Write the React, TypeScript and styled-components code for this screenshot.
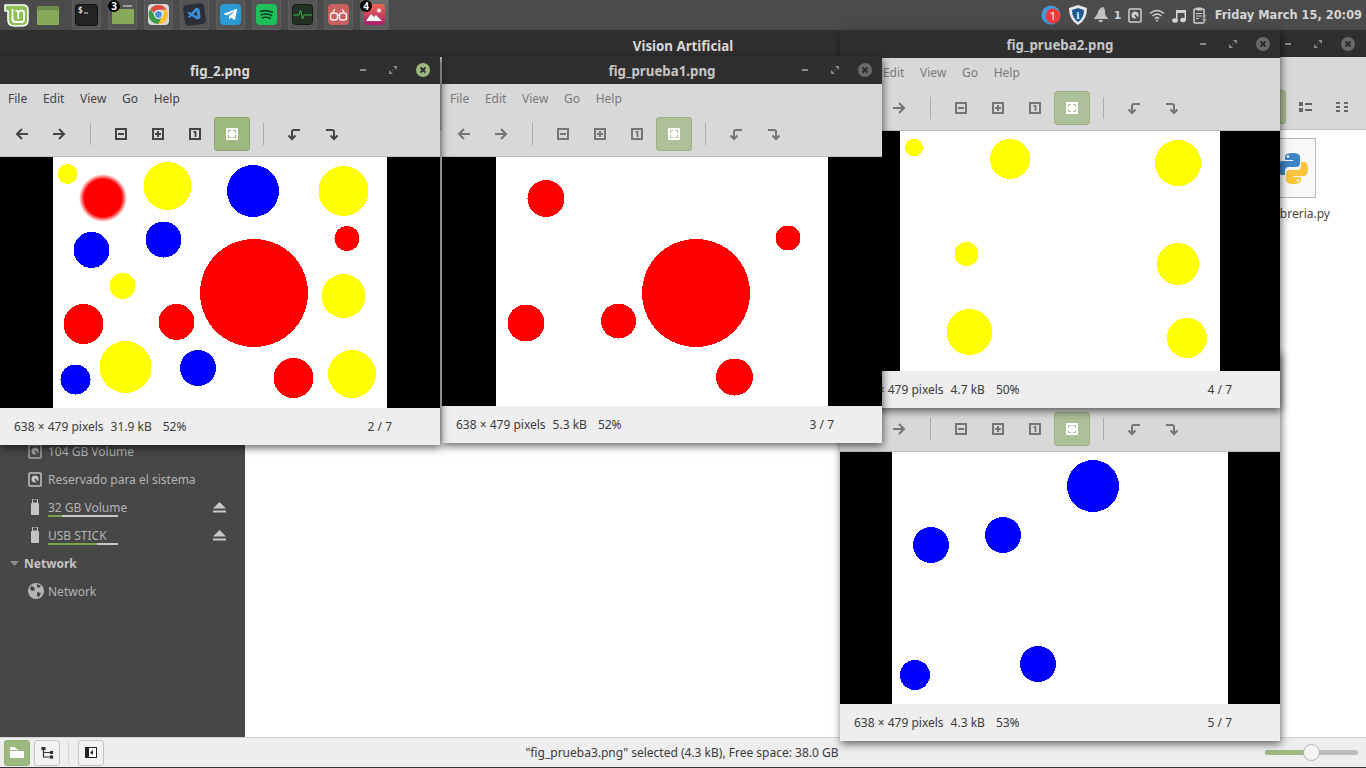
import React from "react";
import styled, { createGlobalStyle } from "styled-components";
import { FaTelegramPlane } from "react-icons/fa";
import { VscVscode } from "react-icons/vsc";

const GlobalStyle = createGlobalStyle`
  html, body {
    margin: 0;
    padding: 0;
    width: 1366px;
    height: 768px;
    overflow: hidden;
    background: #fff;
    font-family: "Noto Sans", "Liberation Sans", sans-serif;
  }
  * { box-sizing: border-box; }
`;

type Circle = [number, number, number];
interface Dot { color: string; items: Circle[] }

interface ViewerProps {
  title: string;
  left: number;
  top: number;
  width: number;
  active?: boolean;
  picX: number;
  picY: number;
  picW: number;
  picH: number;
  dots: Dot[];
  blurred?: Circle;
  kb: string;
  zoom: string;
  pos: string;
}

const Screen = styled.div`
  position: relative;
  width: 1366px;
  height: 768px;
  overflow: hidden;
  display: flex;
  flex-direction: column;
`;

const Panel = styled.div`
  height: 30px;
  background: #4b4b4b;
  display: flex;
  align-items: center;
  padding-left: 3px;
  flex-shrink: 0;
`;

const PanelSlot = styled.div<{ $w: number; $open?: boolean; $hot?: boolean; $gap?: number }>`
  position: relative;
  width: ${(p) => p.$w}px;
  height: 30px;
  margin-right: ${(p) => (p.$gap !== undefined ? p.$gap : p.$open ? 7 : 0)}px;
  display: flex;
  align-items: center;
  justify-content: center;
  background: ${(p) => (p.$hot ? "linear-gradient(#6e6e6e, #5c5c5c)" : p.$open ? "#545454" : "transparent")};
  border: ${(p) => (p.$open ? "1px solid #5e5e5e" : "none")};
  border-top: none;
  border-radius: 0 0 2px 2px;
`;

const Badge = styled.span`
  position: absolute;
  left: -1px;
  top: 0;
  width: 12px;
  height: 12px;
  border-radius: 50%;
  background: #000;
  color: #fff;
  font: 700 10px/12px "Noto Sans", sans-serif;
  text-align: center;
`;

const Tray = styled.div`
  margin-left: auto;
  display: flex;
  align-items: center;
  height: 30px;
  color: #d6d6d6;
  padding-right: 4px;
`;

const TrayIcon = styled.span<{ $w: number; $gap?: number }>`
  position: relative;
  width: ${(p) => p.$w}px;
  height: 30px;
  margin-right: ${(p) => p.$gap || 0}px;
  display: flex;
  align-items: center;
  justify-content: center;
`;

const TrayCount = styled.span`
  font: 700 11px "DejaVu Sans", sans-serif;
  color: #c8d0d8;
  width: 15px;
  padding-left: 5px;
`;

const Clock = styled.span`
  font: 700 11.4px "DejaVu Sans", sans-serif;
  color: #d4d4d4;
  margin-left: 3px;
  white-space: nowrap;
`;

const MainWindow = styled.div`
  flex: 1;
  display: flex;
  flex-direction: column;
  min-height: 0;
`;

const MainTitle = styled.div`
  height: 27px;
  background: #2f2f2f;
  color: #d8d8d8;
  font-size: 13.3px;
  font-weight: 700;
  line-height: 30px;
  text-align: center;
  display: grid;
  grid-template-columns: 1fr auto 1fr;
`;

const TitleText = styled.span`
  grid-column: 2;
  padding-top: 1px;
`;

const MainTools = styled.div`
  height: 73px;
  background: #d8d8d8;
  border-bottom: 1px solid #bdbdbd;
  display: flex;
  justify-content: flex-end;
  align-items: flex-end;
  padding: 0 5px 5px 0;
`;

const MainButton = styled.div<{ $on?: boolean }>`
  width: 36px;
  height: 34px;
  margin-right: 1px;
  display: flex;
  align-items: center;
  justify-content: center;
  border-radius: 3px;
  background: ${(p) => (p.$on ? "#aec09a" : "transparent")};
  border: ${(p) => (p.$on ? "1px solid #9cb083" : "none")};
`;

const MainBody = styled.div`
  flex: 1;
  display: flex;
  min-height: 0;
`;

const Sidebar = styled.div`
  width: 245px;
  background: #474747;
  display: flex;
  flex-direction: column;
  justify-content: flex-end;
  padding-bottom: 132px;
`;

const SideRow = styled.div`
  position: relative;
  height: 28px;
  display: flex;
  align-items: center;
  color: #b4b4b4;
  font-size: 12px;
`;

const SideIcon = styled.span<{ $inset?: number }>`
  width: 48px;
  padding-left: ${(p) => 28 + (p.$inset || 0)}px;
  display: flex;
  align-items: center;
`;

const SideHead = styled(SideRow)`
  font-weight: 700;
  color: #c4c4c4;
  padding-left: 10px;
  gap: 5px;
`;

const Usage = styled.span`
  position: absolute;
  left: 48px;
  bottom: 4px;
  width: 70px;
  height: 2px;
  background: #c8c8c8;
`;

const UsageFill = styled.span`
  display: block;
  height: 2px;
  background: #7ca34c;
`;

const EjectSlot = styled.span`
  margin-left: auto;
  margin-right: 19px;
  display: flex;
`;

const Content = styled.div`
  flex: 1;
  background: #fff;
  display: flex;
  justify-content: flex-end;
  padding: 8px 36px 0 0;
`;

const FileItem = styled.div`
  display: flex;
  flex-direction: column;
  align-items: flex-end;
`;

const FileBox = styled.div`
  width: 68px;
  height: 60px;
  margin-right: 14px;
  border: 1px solid #b8b8b8;
  background: #f8f8f8;
  display: flex;
  align-items: center;
  justify-content: flex-start;
  padding-left: 29px;
`;

const FileName = styled.span`
  font-size: 12px;
  color: #444;
  margin-top: 7px;
`;

const StatusBar = styled.div`
  height: 31px;
  background: #eeeeee;
  border-top: 1px solid #d4d4d4;
  border-bottom: 1px solid #333;
  display: flex;
  align-items: center;
  padding-left: 4px;
  position: relative;
`;

const BarButton = styled.div<{ $on?: boolean }>`
  width: 26px;
  height: 26px;
  margin-right: 4px;
  border-radius: 3px;
  display: flex;
  align-items: center;
  justify-content: center;
  background: ${(p) => (p.$on ? "#9db97f" : "#f2f2f2")};
  border: 1px solid ${(p) => (p.$on ? "#92ad74" : "#c4c4c4")};
`;

const BarSeparator = styled.span`
  width: 1px;
  height: 22px;
  background: #d4d4d4;
  margin: 0 9px 0 4px;
`;

const StatusText = styled.span`
  flex: 1;
  text-align: center;
  font-size: 12px;
  color: #3a3a3a;
  padding-right: 9px;
`;

const Slider = styled.div`
  position: relative;
  width: 93px;
  height: 5px;
  margin-right: 8px;
  background: #bcbcbc;
  border-radius: 3px;
`;

const SliderFill = styled.div`
  height: 5px;
  border-radius: 3px;
  background: #9db97f;
`;

const SliderThumb = styled.div`
  position: absolute;
  top: -6px;
  left: 38px;
  width: 17px;
  height: 17px;
  border-radius: 50%;
  background: #f4f4f4;
  border: 1px solid #b4b4b4;
`;

const ViewerFrame = styled.div<{ $l: number; $t: number; $w: number }>`
  position: absolute;
  left: ${(p) => p.$l}px;
  top: ${(p) => p.$t}px;
  width: ${(p) => p.$w}px;
  display: flex;
  flex-direction: column;
  box-shadow: 1px 3px 8px rgba(0, 0, 0, 0.6);
`;

const TitleBar = styled.div<{ $active?: boolean }>`
  height: 28px;
  background: #2f2f2f;
  color: ${(p) => (p.$active ? "#d8d8d8" : "#c6c6c6")};
  display: grid;
  grid-template-columns: 1fr auto 1fr;
  align-items: center;
  font-size: 13.3px;
  font-weight: 700;
`;

const Controls = styled.div<{ $inset?: number }>`
  grid-column: 3;
  justify-self: end;
  display: flex;
  padding-right: ${(p) => p.$inset || 2}px;
`;

const Control = styled.span`
  width: 30px;
  height: 28px;
  display: flex;
  align-items: center;
  justify-content: center;
`;

const MenuBar = styled.div<{ $active?: boolean }>`
  height: 28px;
  background: #d8d8d8;
  display: flex;
  align-items: center;
  gap: 15.7px;
  padding-left: 8px;
  font-size: 12px;
  color: ${(p) => (p.$active ? "#444" : "#7a7a7a")};
`;

const ToolBar = styled.div`
  height: 45px;
  background: #d8d8d8;
  border-bottom: 1px solid #bdbdbd;
  display: flex;
  align-items: center;
  gap: 1px;
  padding: 0 0 1px 4px;
`;

const ToolButton = styled.div<{ $on?: boolean; $active?: boolean; $shift?: number }>`
  width: 36px;
  height: 34px;
  margin-left: ${(p) => p.$shift || 0}px;
  border-radius: 3px;
  display: flex;
  align-items: center;
  justify-content: center;
  color: ${(p) => (p.$active ? "#444" : "#757575")};
  background: ${(p) => (p.$on ? (p.$active ? "#9db97f" : "#aec09a") : "transparent")};
  border: ${(p) => (p.$on ? `1px solid ${p.$active ? "#88a56e" : "#9cb083"}` : "none")};
`;

const ToolSeparator = styled.span`
  width: 1px;
  height: 22px;
  background: #aaa;
  margin: 0 12px;
`;

const PictureArea = styled.div`
  background: #000;
  display: flex;
  justify-content: center;
`;

const PictureSvg = styled.svg`
  display: block;
  background: #fff;
`;

const ViewerStatus = styled.div`
  height: 37px;
  background: #eeeeee;
  display: flex;
  align-items: center;
  padding: 0 48px 0 14px;
  font-size: 12px;
  color: #3c3c3c;
`;

const Pos = styled.span`
  margin-left: auto;
`;

const Gap = styled.span<{ $w: number }>`
  width: ${(p) => p.$w}px;
`;

const G = "currentColor";

const ArrowLeft = () => (
  <svg width="16" height="16" viewBox="0 0 16 16" fill="none" stroke={G} strokeWidth="2"><path d="M14 8H3M8 3L3 8l5 5" /></svg>
);
const ArrowRight = () => (
  <svg width="16" height="16" viewBox="0 0 16 16" fill="none" stroke={G} strokeWidth="2"><path d="M2 8h11M8 3l5 5-5 5" /></svg>
);
const ZoomBox = ({ kind }: { kind: "out" | "in" | "one" }) => (
  <svg width="12" height="12" viewBox="0 0 12 12" fill="none" stroke={G} strokeWidth="2">
    <rect x="1" y="1" width="10" height="10" />
    {kind !== "one" && <path d="M3 6h6" />}
    {kind === "in" && <path d="M6 3v6" />}
    {kind === "one" && <path d="M4.500 3.800H6.500V9" strokeWidth="1.800" />}
  </svg>
);
const FitBox = ({ tone }: { tone: string }) => (
  <svg width="12" height="12" viewBox="0 0 12 12">
    <rect x="0" y="0" width="12" height="12" fill="#fff" />
    <path d="M2.500 5V2.500H5M7 2.500h2.500V5M9.500 7v2.500H7M5 9.500H2.500V7" fill="none" stroke={tone} strokeWidth="1" />
  </svg>
);
const RotateLeft = () => (
  <svg width="14" height="14" viewBox="0 0 14 14" fill="none" stroke={G} strokeWidth="2"><path d="M13 3H7Q5 3 5 5v7M1.500 8.500L5 12l3.500-3.500" /></svg>
);
const RotateRight = () => (
  <svg width="14" height="14" viewBox="0 0 14 14" fill="none" stroke={G} strokeWidth="2"><path d="M1 3h6q2 0 2 2v7M5.500 8.500L9 12l3.500-3.500" /></svg>
);

const Minimize = () => (
  <svg width="8" height="8" viewBox="0 0 8 8"><rect x="1" y="3" width="6" height="2" fill="#8a8a8a" /></svg>
);
const Maximize = () => (
  <svg width="8" height="8" viewBox="0 0 8 8"><path d="M8 0v4L4 0zM0 8V4l4 4z" fill="#8a8a8a" /><path d="M3 5l2-2" stroke="#5c5c5c" /></svg>
);
const CloseDot = ({ active }: { active?: boolean }) => (
  <svg width="14" height="14" viewBox="0 0 14 14">
    <circle cx="7" cy="7" r="7" fill={active ? "#9db97f" : "#6a6a6a"} />
    <path d="M4.500 4.500l5 5M9.500 4.500l-5 5" stroke={active ? "#2f2f2f" : "#2a2a2a"} strokeWidth="1.800" />
  </svg>
);

const Viewer = (p: ViewerProps) => (
  <ViewerFrame $l={p.left} $t={p.top} $w={p.width}>
    <TitleBar $active={p.active}>
      <TitleText>{p.title}</TitleText>
      <Controls>
        <Control><Minimize /></Control>
        <Control><Maximize /></Control>
        <Control><CloseDot active={p.active} /></Control>
      </Controls>
    </TitleBar>
    <MenuBar $active={p.active}>
      <span>File</span>
      <span>Edit</span>
      <span>View</span>
      <span>Go</span>
      <span>Help</span>
    </MenuBar>
    <ToolBar>
      <ToolButton $active={p.active}><ArrowLeft /></ToolButton>
      <ToolButton $active={p.active}><ArrowRight /></ToolButton>
      <ToolSeparator />
      <ToolButton $active={p.active} $shift={-1}><ZoomBox kind="out" /></ToolButton>
      <ToolButton $active={p.active}><ZoomBox kind="in" /></ToolButton>
      <ToolButton $active={p.active}><ZoomBox kind="one" /></ToolButton>
      <ToolButton $on $active={p.active}><FitBox tone={p.active ? "#9db97f" : "#aec09a"} /></ToolButton>
      <ToolSeparator />
      <ToolButton $active={p.active} $shift={-1}><RotateLeft /></ToolButton>
      <ToolButton $active={p.active} $shift={1}><RotateRight /></ToolButton>
    </ToolBar>
    <PictureArea>
      <PictureSvg width={p.picW} height={p.picH} viewBox={`${p.picX} ${p.picY} ${p.picW} ${p.picH}`}>
        <defs>
          <radialGradient id="soft">
            <stop offset="78%" stopColor="#ff0000" />
            <stop offset="100%" stopColor="#ff0000" stopOpacity="0" />
          </radialGradient>
        </defs>
        {p.blurred && <circle cx={p.blurred[0]} cy={p.blurred[1]} r={p.blurred[2]} fill="url(#soft)" />}
        {p.dots.map((d) =>
          d.items.map(([x, y, r]) => (
            <circle key={`${d.color}${x}${y}`} cx={x} cy={y} r={r} fill={d.color} shapeRendering="crispEdges" />
          ))
        )}
      </PictureSvg>
    </PictureArea>
    <ViewerStatus>
      <span>638 × 479 pixels</span>
      <Gap $w={7} />
      <span>{p.kb}</span>
      <Gap $w={11} />
      <span>{p.zoom}</span>
      <Pos>{p.pos}</Pos>
    </ViewerStatus>
  </ViewerFrame>
);

const MintLogo = () => (
  <svg width="25" height="23" viewBox="0 0 25 23">
    <path d="M1 1H19Q24 1 24 6V16Q24 22 18 22H10Q4 22 4 16V7H1Z" fill="#8fc056" stroke="#fff" strokeWidth="1.600" strokeLinejoin="round" />
    <path d="M8.500 5V15Q8.500 18 11.500 18H17.500Q20 18 20 15V9Q20 6.500 17.500 6.500Q15 6.500 14.300 8.500Q13.600 6.500 11.500 6.500M14.300 8.500V15" fill="none" stroke="#fff" strokeWidth="1.800" />
  </svg>
);

const FolderIcon = ({ lid, tab }: { lid?: boolean; tab?: boolean }) => (
  <svg width="22" height="19" viewBox="0 0 22 19">
    {tab && <path d="M11 1h9" stroke="#e8e8e8" strokeWidth="1" />}
    {lid && <rect x="0" y="0" width="22" height="19" rx="1" fill="#6f8b4c" />}
    <rect x="0" y="4" width="22" height="15" rx="1" fill="#87a95a" />
  </svg>
);

const TerminalIcon = () => (
  <svg width="23" height="22" viewBox="0 0 23 22">
    <rect x="0.500" y="0.500" width="22" height="21" rx="3" fill="#232323" stroke="#111" />
    <text x="3" y="9" fontSize="8" fontWeight="700" fill="#ddd" fontFamily="DejaVu Sans Mono">$</text>
    <path d="M9 9h4" stroke="#ddd" />
  </svg>
);

const ChromeIcon = () => (
  <svg width="21" height="21" viewBox="0 0 21 21">
    <rect width="21" height="21" rx="4" fill="#d8d8d8" />
    <path d="M10.500 1a9.500 9.500 0 0 1 8.200 4.800H10.500a4.700 4.700 0 0 0-4.500 3.300L2.500 5a9.500 9.500 0 0 1 8-4z" fill="#dd4b3f" />
    <path d="M18.700 5.800A9.500 9.500 0 0 1 10 20l4-7a4.700 4.700 0 0 0 .5-7.200z" fill="#fbc02d" />
    <path d="M2.500 5L6.600 12a4.700 4.700 0 0 0 7.400 1l-4 7A9.500 9.500 0 0 1 2.500 5z" fill="#3c9a45" />
    <circle cx="10.500" cy="10.500" r="4" fill="#4e8fd8" stroke="#fff" />
  </svg>
);

const AppTile = styled.span<{ $bg: string; $c?: string; $tilt?: number }>`
  width: 21px;
  height: 21px;
  border-radius: 4px;
  background: ${(p) => p.$bg};
  color: ${(p) => p.$c || "#fff"};
  transform: rotate(${(p) => p.$tilt || 0}deg);
  display: flex;
  align-items: center;
  justify-content: center;
  font-size: 15px;
`;

const SpotifyIcon = () => (
  <svg width="21" height="21" viewBox="0 0 21 21">
    <rect width="21" height="21" rx="4" fill="#1fc05c" />
    <path d="M4.500 7.500q6-2 12 .8M5.500 10.700q5-1.600 10 .7M6.300 13.700q4-1.200 8 .6" fill="none" stroke="#173d25" strokeWidth="1.600" strokeLinecap="round" />
  </svg>
);

const ActivityIcon = () => (
  <svg width="21" height="21" viewBox="0 0 21 21">
    <rect x="0.500" y="0.500" width="20" height="20" rx="3" fill="#233024" stroke="#141a14" />
    <path d="M1 11h6l1.500-5 2 9 1.500-4h8" fill="none" stroke="#3cb544" />
  </svg>
);

const GlassesIcon = () => (
  <svg width="21" height="21" viewBox="0 0 21 21">
    <rect width="21" height="21" rx="4" fill="#c96060" />
    <rect x="2.500" y="9" width="7" height="7" rx="2.500" fill="none" stroke="#f6eaea" strokeWidth="1.500" />
    <rect x="11.500" y="9" width="7" height="7" rx="2.500" fill="none" stroke="#f6eaea" strokeWidth="1.500" />
    <path d="M9.500 11h2M4 9.500l3-4.500M17 9.500l-3-4.500" fill="none" stroke="#f6eaea" strokeWidth="1.300" />
  </svg>
);

const PhotoIcon = () => (
  <svg width="21" height="21" viewBox="0 0 21 21">
    <defs>
      <linearGradient id="ph" x1="0" y1="0" x2="0" y2="1">
        <stop offset="0" stopColor="#ee6a4b" />
        <stop offset="1" stopColor="#a81e6e" />
      </linearGradient>
    </defs>
    <rect width="21" height="21" rx="4" fill="url(#ph)" />
    <circle cx="15" cy="6.500" r="2" fill="#fff" />
    <path d="M2 17l5-7 3 3 2-2 6 6z" fill="#fff" />
  </svg>
);

const ShieldIcon = () => (
  <svg width="18" height="20" viewBox="0 0 18 20">
    <path d="M9 0l9 3q0 12-9 17Q0 15 0 3z" fill="#e8e8e8" />
    <path d="M9 3l6 2q0 8-6 12Q3 13 3 5z" fill="#1d5a94" />
    <text x="9" y="14" fontSize="10" fontWeight="700" fill="#dfe9f3" textAnchor="middle" fontFamily="DejaVu Serif">i</text>
  </svg>
);

const BellIcon = () => (
  <svg width="16" height="16" viewBox="0 0 16 16">
    <path d="M10 0q2 1 2 5 0 4 3 6v1H1v-1q2-1 4-6 1-4 5-5zM5 13h5q-1 3-3 2z" fill="#c0c0c0" />
  </svg>
);

const DiskIcon = ({ tone = "#d0d0d0" }: { tone?: string }) => (
  <svg width="14" height="15" viewBox="0 0 14 15">
    <rect x="1" y="1" width="12" height="13" rx="1" fill="none" stroke={tone} strokeWidth="1.500" />
    <circle cx="7" cy="7" r="3.500" fill={tone} />
    <path d="M7 7l3 4" stroke="#444" strokeWidth="1.500" />
  </svg>
);

const WifiIcon = () => (
  <svg width="16" height="13" viewBox="0 0 16 13" fill="none" stroke="#cfcfcf" strokeWidth="1.400">
    <path d="M1 4.500q7-6 14 0M3.500 7q4.500-4 9 0M5.800 9.500q2.200-2 4.400 0" />
    <circle cx="8" cy="11.500" r="1" fill="#cfcfcf" stroke="none" />
  </svg>
);

const MusicIcon = () => (
  <svg width="14" height="15" viewBox="0 0 14 15">
    <path d="M4 2h10v10h-1.500V5H5.500v8H4z" fill="#d4d4d4" />
    <ellipse cx="3" cy="12.500" rx="2.800" ry="2.200" fill="#d4d4d4" />
    <ellipse cx="11" cy="12" rx="2.800" ry="2.200" fill="#d4d4d4" />
  </svg>
);

const ClipboardIcon = () => (
  <svg width="15" height="17" viewBox="0 0 15 17">
    <rect x="1" y="2" width="10" height="14" rx="1" fill="none" stroke="#cfcfcf" strokeWidth="1.500" />
    <rect x="3.500" y="0.500" width="5" height="3" fill="#cfcfcf" />
    <path d="M3 6.500h6M3 9h6M3 11.500h3" stroke="#cfcfcf" />
    <path d="M12 8l-3 5h2l-1 4 4-5h-2l1-4z" fill="#9a9a9a" />
  </svg>
);

const UsbIcon = () => (
  <svg width="8" height="16" viewBox="0 0 8 16">
    <rect x="1.500" y="0" width="5" height="4" fill="none" stroke="#c4c4c4" />
    <rect x="0" y="4" width="8" height="12" rx="1" fill="#c4c4c4" />
  </svg>
);

const EjectIcon = () => (
  <svg width="13" height="11" viewBox="0 0 13 11">
    <path d="M6.500 0L13 6.500H0z" fill="#c8c8c8" />
    <rect x="0" y="8.500" width="13" height="2" fill="#c8c8c8" />
  </svg>
);

const GlobeIcon = () => (
  <svg width="16" height="16" viewBox="0 0 16 16">
    <circle cx="8" cy="8" r="8" fill="#b4b4b4" />
    <path d="M3 3l3 1 1 3-3 1-2-2zM9 9l4 1-2 4-2-1zM9 1l4 2-2 2-2-1z" fill="#474747" />
  </svg>
);

const PythonIcon = () => (
  <svg width="30" height="33" viewBox="0 0 30 33">
    <path d="M14.500 1Q7 1 7 5v3h8v1H4Q0 9 0 16q0 7 4 7h3v-4q0-4 4-4h7q4 0 4-4V5q0-4-7.500-4z" fill="#3f86c6" />
    <circle cx="10" cy="4.500" r="1.300" fill="#fff" />
    <path d="M15.500 32q7.500 0 7.500-4v-3h-8v-1h11q4 0 4-7 0-7-4-7h-3v4q0 4-4 4h-7q-4 0-4 4v6q0 4 7.500 4z" fill="#fcc43a" />
    <circle cx="20" cy="28.500" r="1.300" fill="#fff" />
  </svg>
);

const ListIcon = () => (
  <svg width="13" height="10" viewBox="0 0 13 10" fill="#666">
    <rect x="0" y="0" width="4" height="4" /><rect x="0" y="6" width="4" height="4" />
    <rect x="6" y="1" width="7" height="2" /><rect x="6" y="7" width="7" height="2" />
  </svg>
);

const CompactIcon = () => (
  <svg width="12" height="10" viewBox="0 0 12 10" fill="#666">
    {[0, 4, 8].map((y) => (
      <g key={y}><rect x="0" y={y} width="4" height="2" /><rect x="8" y={y} width="4" height="2" /></g>
    ))}
  </svg>
);

const PlacesFolder = () => (
  <svg width="14" height="11" viewBox="0 0 14 11" fill="#fff"><path d="M0 0h5l1 2h2v1H0zM0 4h14v7H0z" /></svg>
);
const TreeIcon = () => (
  <svg width="13" height="12" viewBox="0 0 13 12" fill="none" stroke="#333" strokeWidth="1.200">
    <path d="M2.500 1v9h8M2.500 5.500h8" /><rect x="1" y="0.500" width="3" height="2" fill="#333" />
    <rect x="9.500" y="4.500" width="2" height="2" fill="#333" /><rect x="9.500" y="9" width="2" height="2" fill="#333" />
  </svg>
);
const PaneIcon = () => (
  <svg width="12" height="11" viewBox="0 0 12 11">
    <rect x="0.500" y="0.500" width="11" height="10" fill="#fff" stroke="#222" />
    <rect x="0" y="0" width="4" height="11" fill="#222" />
    <path d="M8 3L5 5.500 8 8z" fill="#222" />
  </svg>
);

const SideTriangle = () => (
  <svg width="9" height="5" viewBox="0 0 9 5"><path d="M0 0h9L4.500 5z" fill="#8e8e8e" /></svg>
);

const windows: ViewerProps[] = [
  {
    title: "fig_prueba3.png", left: 840, top: 351, width: 440,
    picX: 892, picY: 452, picW: 336, picH: 252, kb: "4.3 kB", zoom: "53%", pos: "5 / 7",
    dots: [{ color: "#0000ff", items: [[1093, 486, 26], [931, 545, 18], [1003, 535, 18], [915, 675, 15], [1038, 664, 18]] }],
  },
  {
    title: "fig_prueba2.png", left: 840, top: 30, width: 440,
    picX: 900, picY: 131, picW: 320, picH: 240, kb: "4.7 kB", zoom: "50%", pos: "4 / 7",
    dots: [{ color: "#ffff00", items: [[914, 147.5, 9], [1010, 159, 20], [1178, 163, 23], [966.5, 254, 12], [1178, 264, 21], [969.5, 332, 23], [1187, 338, 20]] }],
  },
  {
    title: "fig_prueba1.png", left: 442, top: 56, width: 440,
    picX: 496, picY: 157, picW: 332, picH: 249, kb: "5.3 kB", zoom: "52%", pos: "3 / 7",
    dots: [{ color: "#ff0000", items: [[546, 198.5, 18.5], [696, 293, 54], [788, 238, 12.5], [526, 323, 18.5], [618.5, 321, 17.5], [734.5, 377, 18.5]] }],
  },
  {
    title: "fig_2.png", left: 0, top: 56, width: 440, active: true,
    picX: 53, picY: 157, picW: 334, picH: 251, kb: "31.9 kB", zoom: "52%", pos: "2 / 7",
    blurred: [103, 198, 24],
    dots: [
      { color: "#ffff00", items: [[67.5, 174, 10], [167.5, 186, 24], [343.5, 191, 25], [122.5, 286, 13], [343.5, 296, 22], [125.5, 367, 26], [352, 374, 24]] },
      { color: "#0000ff", items: [[253, 191, 26], [91.5, 250, 18], [163.5, 239.5, 18], [198, 368, 18], [75.5, 379.5, 15]] },
      { color: "#ff0000", items: [[347, 238.5, 12.5], [254, 293, 54], [83.5, 324, 20], [176.5, 322, 18], [293.5, 378, 20]] },
    ],
  },
];

export default function App() {
  return (
    <Screen>
      <GlobalStyle />
      <Panel>
        <PanelSlot $w={27}><MintLogo /></PanelSlot>
        <PanelSlot $w={35} $gap={7}><FolderIcon lid /></PanelSlot>
        <PanelSlot $w={29} $open><TerminalIcon /></PanelSlot>
        <PanelSlot $w={29} $open><Badge>3</Badge><FolderIcon tab /></PanelSlot>
        <PanelSlot $w={29} $open><ChromeIcon /></PanelSlot>
        <PanelSlot $w={29} $open><AppTile $bg="#2a2f3a" $c="#3a8fd8" $tilt={-8}><VscVscode /></AppTile></PanelSlot>
        <PanelSlot $w={29} $open><AppTile $bg="#2b9ad6"><FaTelegramPlane /></AppTile></PanelSlot>
        <PanelSlot $w={29} $open><SpotifyIcon /></PanelSlot>
        <PanelSlot $w={29} $open><ActivityIcon /></PanelSlot>
        <PanelSlot $w={29} $open><GlassesIcon /></PanelSlot>
        <PanelSlot $w={29} $open $hot><Badge>4</Badge><PhotoIcon /></PanelSlot>
        <Tray>
          <TrayIcon $w={20} $gap={2}>
            <svg width="20" height="20" viewBox="0 0 20 20">
              <circle cx="10" cy="10" r="9.500" fill="#3d9be0" />
              <circle cx="12" cy="11" r="7.500" fill="#ee3a3a" />
              <text x="12" y="15" fontSize="11" fill="#fff" textAnchor="middle" fontFamily="Noto Sans">1</text>
            </svg>
          </TrayIcon>
          <TrayIcon $w={30}><ShieldIcon /></TrayIcon>
          <TrayIcon $w={16}><BellIcon /></TrayIcon>
          <TrayCount>1</TrayCount>
          <TrayIcon $w={22}><DiskIcon /></TrayIcon>
          <TrayIcon $w={22}><WifiIcon /></TrayIcon>
          <TrayIcon $w={22}><MusicIcon /></TrayIcon>
          <TrayIcon $w={22}><ClipboardIcon /></TrayIcon>
          <Clock>Friday March 15, 20:09</Clock>
        </Tray>
      </Panel>

      <MainWindow>
        <MainTitle>
          <TitleText>Vision Artificial</TitleText>
          <Controls $inset={3}>
            <Control><Minimize /></Control>
            <Control><Maximize /></Control>
            <Control><CloseDot /></Control>
          </Controls>
        </MainTitle>
        <MainTools>
          <MainButton $on />
          <MainButton><ListIcon /></MainButton>
          <MainButton><CompactIcon /></MainButton>
        </MainTools>
        <MainBody>
          <Sidebar>
            <SideRow><SideIcon><DiskIcon tone="#a8a8a8" /></SideIcon>104 GB Volume</SideRow>
            <SideRow><SideIcon><DiskIcon tone="#c4c4c4" /></SideIcon>Reservado para el sistema</SideRow>
            <SideRow>
              <SideIcon $inset={3}><UsbIcon /></SideIcon>32 GB Volume
              <Usage><UsageFill style={{ width: "20%" }} /></Usage>
              <EjectSlot><EjectIcon /></EjectSlot>
            </SideRow>
            <SideRow>
              <SideIcon $inset={3}><UsbIcon /></SideIcon>USB STICK
              <Usage><UsageFill style={{ width: "70%" }} /></Usage>
              <EjectSlot><EjectIcon /></EjectSlot>
            </SideRow>
            <SideHead><SideTriangle />Network</SideHead>
            <SideRow><SideIcon><GlobeIcon /></SideIcon>Network</SideRow>
          </Sidebar>
          <Content>
            <FileItem>
              <FileBox><PythonIcon /></FileBox>
              <FileName>libreria.py</FileName>
            </FileItem>
          </Content>
        </MainBody>
        <StatusBar>
          <BarButton $on><PlacesFolder /></BarButton>
          <BarButton><TreeIcon /></BarButton>
          <BarSeparator />
          <BarButton><PaneIcon /></BarButton>
          <StatusText>"fig_prueba3.png" selected (4.3 kB), Free space: 38.0 GB</StatusText>
          <Slider>
            <SliderFill style={{ width: "50%" }} />
            <SliderThumb />
          </Slider>
        </StatusBar>
      </MainWindow>

      {windows.map((w) => <Viewer key={w.title} {...w} />)}
    </Screen>
  );
}
